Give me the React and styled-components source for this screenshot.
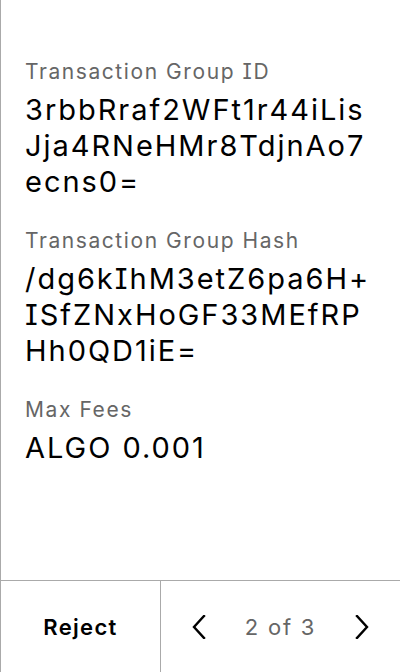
import React from "react";
import styled, { createGlobalStyle } from "styled-components";

const Global = createGlobalStyle`
  html, body { margin: 0; padding: 0; background: #fff; }
  body {
    font-family: Inter, "Noto Sans", sans-serif;
    font-feature-settings: "cv08" 1;
  }
  * { box-sizing: border-box; }
`;

const Page = styled.div`
  width: 400px;
  height: 672px;
  display: flex;
  flex-direction: column;
  border-left: 1px solid #aaaaaa;
  background: #fff;
`;

const Content = styled.div`
  flex: 1;
  padding: 56px 24px 0 24px;
  display: flex;
  flex-direction: column;
`;

const Field = styled.div`
  display: flex;
  flex-direction: column;
  margin-bottom: 25px;
`;

const Label = styled.div`
  font-size: 21px;
  line-height: 32px;
  letter-spacing: 0.075em;
  color: #666666;
  margin-bottom: 4px;
`;

const Value = styled.div`
  font-size: 29px;
  line-height: 36px;
  letter-spacing: 0.068em;
  color: #000;
  word-break: break-all;
`;

const Footer = styled.div`
  height: 92px;
  border-top: 1px solid #aaaaaa;
  display: flex;
`;

const RejectButton = styled.button`
  width: 160px;
  border: none;
  border-right: 1px solid #aaaaaa;
  background: transparent;
  font-family: inherit;
  font-feature-settings: inherit;
  font-size: 22px;
  font-weight: 600;
  letter-spacing: 0.06em;
  color: #000;
  padding: 0;
`;

const Pager = styled.div`
  flex: 1;
  display: flex;
  align-items: center;
  justify-content: space-between;
  padding: 0 30px;
`;

const NavButton = styled.button`
  border: none;
  background: transparent;
  padding: 0;
  width: 16px;
  height: 30px;
  display: flex;
  align-items: center;
  justify-content: center;
`;

const PageText = styled.span`
  font-size: 22px;
  letter-spacing: 0.08em;
  color: #666666;
`;

const Chevron = ({ dir }) => (
  <svg width="16" height="24" viewBox="0 0 16 24" fill="none">
    <path
      d={dir === "left" ? "M13 1 L3 12 L13 23" : "M3 1 L13 12 L3 23"}
      stroke="#000"
      strokeWidth="2.4"
      strokeLinecap="square"
    />
  </svg>
);

const fields = [
  { label: "Transaction Group ID", value: "3rbbRraf2WFt1r44iLisJja4RNeHMr8TdjnAo7ecns0=" },
  { label: "Transaction Group Hash", value: "/dg6kIhM3etZ6pa6H+ISfZNxHoGF33MEfRPHh0QD1iE=" },
  { label: "Max Fees", value: "ALGO 0.001" },
];

export default function App() {
  return (
    <>
      <Global />
      <Page>
        <Content>
          {fields.map((f) => (
            <Field key={f.label}>
              <Label>{f.label}</Label>
              <Value>{f.value}</Value>
            </Field>
          ))}
        </Content>
        <Footer>
          <RejectButton>Reject</RejectButton>
          <Pager>
            <NavButton><Chevron dir="left" /></NavButton>
            <PageText>2 of 3</PageText>
            <NavButton><Chevron dir="right" /></NavButton>
          </Pager>
        </Footer>
      </Page>
    </>
  );
}
